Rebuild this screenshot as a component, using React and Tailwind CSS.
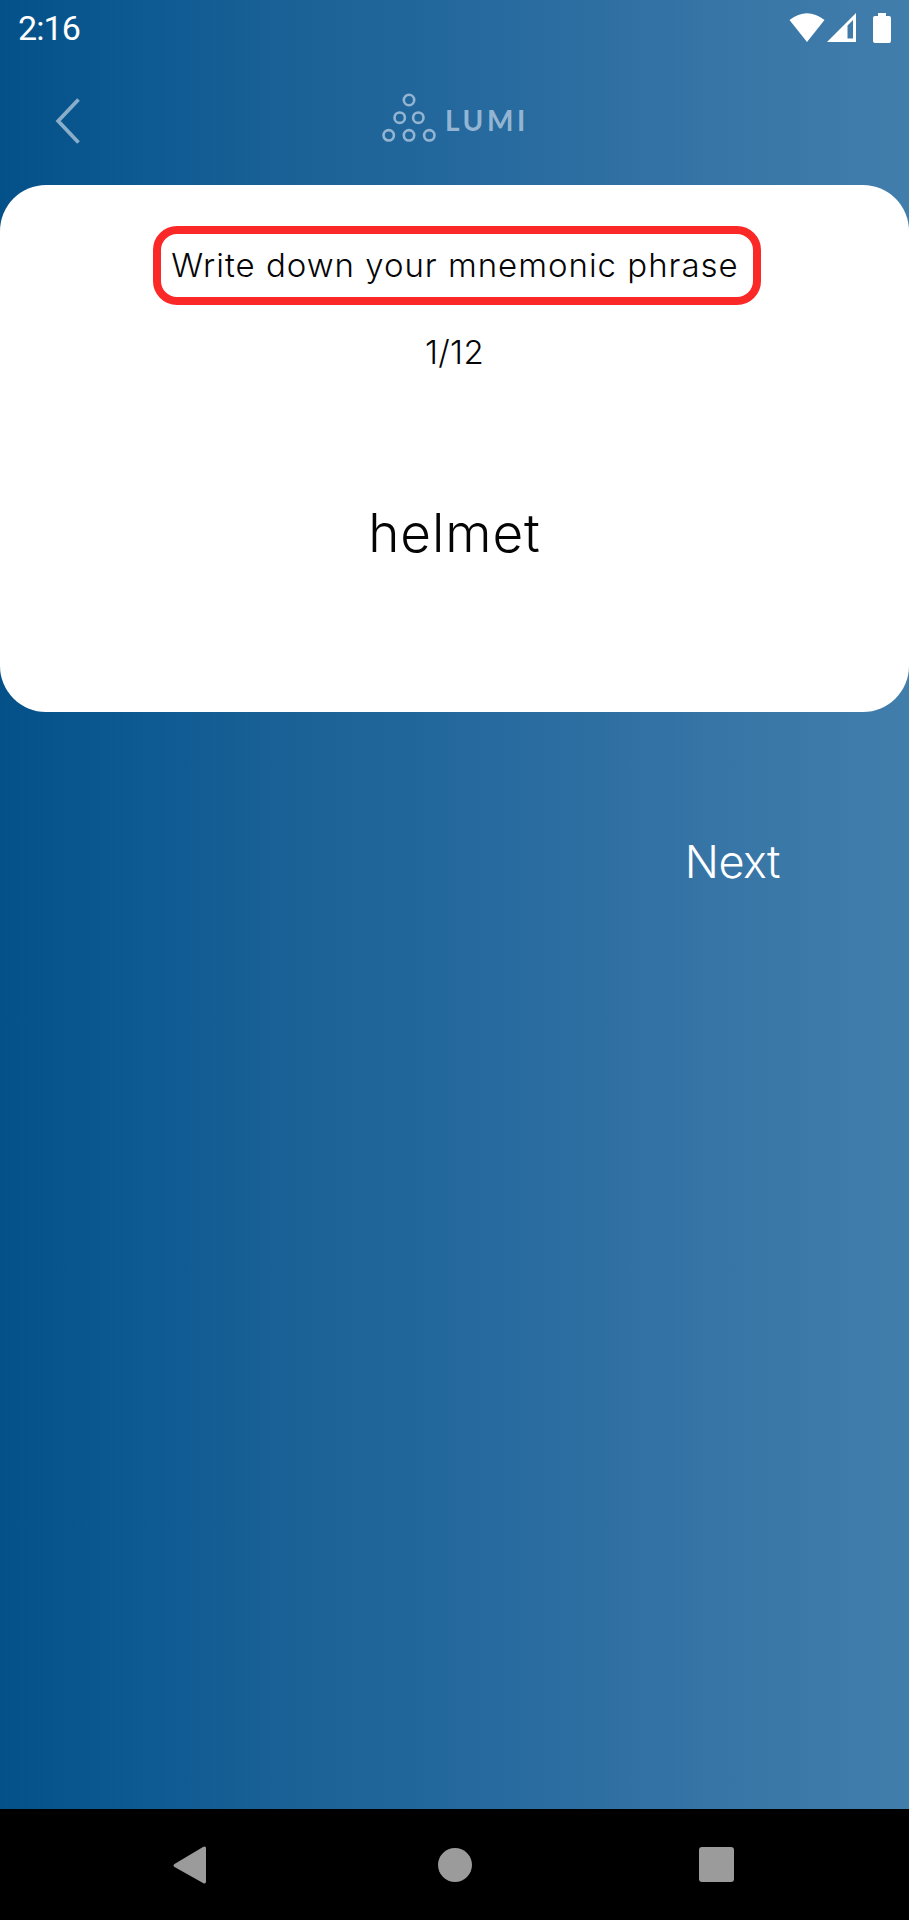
function StatusBar() {
  return (
    <div className="flex h-[57px] items-center justify-between pl-[18px] pr-[18px]">
      <span className="font-['Roboto',sans-serif] text-[34px] font-normal leading-[57px] tracking-[-0.9px]">2:16</span>
      <svg className="h-[57px] w-[104px]" viewBox="787 0 104 57" fill="#fff">
        <path d="M789.5 20Q807 6.5 824.5 20L807 42Z" />
        <path fillRule="evenodd" d="M827 42L856 13V42ZM847.5 25.5V38.5H853V20Z" />
        <path d="M878 13h8v3h3q2 0 2 2v23q0 2-2 2h-14q-2 0-2-2V18q0-2 2-2h3Z" />
      </svg>
    </div>
  );
}

function Header() {
  return (
    <header className="grid h-[128px] grid-cols-[1fr_auto_1fr] items-center">
      <button className="ml-[55px] h-[48px] w-[26px]" aria-label="Back">
        <svg className="h-[48px] w-[26px]" viewBox="0 0 26 48" fill="none" stroke="#8aaeca" strokeWidth="3.8">
          <path d="M23.5 2.5L3.2 24L23.5 45.5" />
        </svg>
      </button>
      <div className="mb-[6px] ml-[2px] flex items-center text-[#94b5d2]">
        <svg className="h-[50px] w-[54px]" viewBox="0 0 54 50" fill="none" stroke="currentColor" strokeWidth="2.6">
          <circle cx="27" cy="7" r="5.2" />
          <circle cx="17.7" cy="24.7" r="5.2" />
          <circle cx="36.3" cy="24.7" r="5.2" />
          <circle cx="6.7" cy="42.3" r="5.2" />
          <circle cx="27" cy="42.3" r="5.2" />
          <circle cx="47.3" cy="42.3" r="5.2" />
        </svg>
        <span className="ml-[9px] pt-[3px] font-['Lato',sans-serif] text-[28px] font-bold leading-[30px] tracking-[3.6px]">LUMI</span>
      </div>
    </header>
  );
}

function PhraseCard() {
  return (
    <main className="flex h-[527px] flex-col items-center rounded-[46px] bg-white pt-[41px] text-[#050505]">
      <div className="ml-[5px] flex h-[79px] w-[608px] items-center justify-center rounded-[24px] border-[8px] border-[#fb2828] pb-[2px] pr-[4px]">
        <h1 className="whitespace-nowrap text-[33px] leading-[40px] tracking-[0.98px]">Write down your mnemonic phrase</h1>
      </div>
      <p className="mt-[27px] text-[33px] leading-[40px] tracking-[0.3px]">1/12</p>
      <p className="mt-[129px] text-[53px] leading-[64px] tracking-[0.9px]">helmet</p>
    </main>
  );
}

function NavigationBar() {
  return (
    <nav className="flex h-[111px] items-center bg-black pl-[172px] text-[#9b9b9b]">
      <svg className="h-[38px] w-[36px]" viewBox="172 1845 36 38" fill="currentColor">
        <path d="M174.5 1863L203 1846Q206 1844.5 206 1847.5V1880.5Q206 1883.5 203 1882L174.5 1866Q172.5 1864.5 174.5 1863Z" />
      </svg>
      <div className="ml-[229.5px] h-[34px] w-[34px] rounded-full bg-[#9b9b9b]" />
      <div className="ml-[227px] h-[35px] w-[35px] rounded-[3px] bg-[#9b9b9b]" />
    </nav>
  );
}

export default function App() {
  return (
    <div className="flex h-[1920px] w-[909px] flex-col overflow-hidden bg-[linear-gradient(90deg,#04518a_0%,#0e5a92_17%,#1b6297_33%,#25699e_52%,#3171a3_70%,#427eac_100%)] font-['Inter',sans-serif] font-light text-white">
      <StatusBar />
      <Header />
      <PhraseCard />
      <div className="flex flex-1 items-start justify-end pr-[129px] pt-[122px]">
        <button className="text-[45px] leading-[56px] tracking-[-0.5px]">Next</button>
      </div>
      <NavigationBar />
    </div>
  );
}
